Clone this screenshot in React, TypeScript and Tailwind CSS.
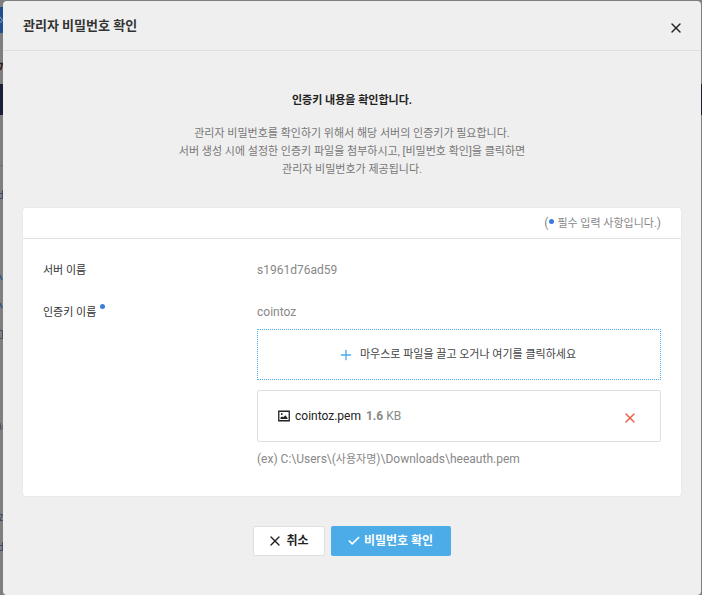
import { Check, Plus, X } from "lucide-react";

function Backdrop() {
  return (
    <div aria-hidden="true" className="absolute inset-0 overflow-hidden bg-[#7f7f7f]">
      <div className="absolute top-[7px] left-0 h-[26px] w-[3px] bg-[#1f4f8c]" />
      <div className="absolute inset-x-0 top-[84px] h-[31px] bg-[#1a1f38]" />
      <div className="absolute inset-x-0 top-[165px] h-px bg-[#6f6f6f]" />
      <svg width="3" height="595" viewBox="0 0 3 595" className="absolute top-0 left-0" fill="none">
        <path d="M0 17l3 4M0 22h2" stroke="#8fa9c8" />
        <path d="M0 63.5h2.5L.5 70" stroke="#33201c" strokeWidth="1.5" />
        <path d="M2.5 190v9M0 193.5h2M0 198.5h2" stroke="#414a66" />
        <path d="M0 275l2 5M0 303l2 5" stroke="#2f5688" strokeWidth="1.5" />
        <path d="M0 330.5h2.5v8H0" stroke="#4a4f5c" />
        <path d="M0 423l1 7M3 425v4" stroke="#4b4a5c" />
        <path d="M0 514.5h2.5L0 520.5h3" stroke="#414a66" />
        <path d="M2.5 542v9M0 545.5h2M0 550.5h2" stroke="#414a66" />
      </svg>
    </div>
  );
}

function ImageIcon() {
  return (
    <svg viewBox="0 0 12 12" className="size-3 shrink-0" fill="none" aria-hidden="true">
      <path d="M.75 1.25h10.5v9.5H.75z" stroke="#222" strokeWidth="1.3" />
      <path d="M2.5 9V7.6l1.6-1.2 1.2.8 2-2L9.5 8v1z" fill="#222" />
      <circle cx="3.8" cy="4" r=".9" fill="#222" />
    </svg>
  );
}

function RequiredDot() {
  return <span className="inline-block size-[5px] rounded-full bg-[#3b7ddd]" />;
}

export default function App() {
  return (
    <div className="relative flex min-h-screen flex-col pt-px pr-px pl-[3px] font-['Roboto','Noto_Sans_CJK_KR',sans-serif] text-[12px] leading-[18px] text-[#888]">
      <Backdrop />
      <section role="dialog" aria-labelledby="dialog-title" className="relative flex grow flex-col rounded-[4px] bg-[#efefef]">
        <header className="flex h-[50px] items-center justify-between border-b border-[#dfdfdf] pr-[17px] pl-5">
          <h1 id="dialog-title" className="text-[13px] font-bold text-[#333]">관리자 비밀번호 확인</h1>
          <button type="button" aria-label="닫기" className="mt-1 text-[#222]">
            <X size={16} strokeWidth={2} />
          </button>
        </header>

        <div className="px-5 pt-[41px] text-center text-[11px]">
          <h2 className="font-bold text-[#222]">인증키 내용을 확인합니다.</h2>
          <p className="mt-[15px] text-[#777]">
            관리자 비밀번호를 확인하기 위해서 해당 서버의 인증키가 필요합니다.
            <br />
            서버 생성 시에 설정한 인증키 파일을 첨부하시고, [비밀번호 확인]을 클릭하면
            <br />
            관리자 비밀번호가 제공됩니다.
          </p>
        </div>

        <form className="flex flex-col px-5 pt-[29px]" onSubmit={(event) => event.preventDefault()}>
          <div className="rounded-[3px] bg-white ring-1 ring-[#eaeaea]">
            <p className="flex h-[31px] items-center justify-end border-b border-[#e2e2e2] px-5 text-[11px]">
              <span className="text-[12px]">(</span>
              <span className="mr-[3px] ml-px mb-1 flex"><RequiredDot /></span>
              <span className="pt-px">필수 입력 사항입니다.</span>
              <span className="text-[12px]">)</span>
            </p>
            <dl className="grid grid-cols-[214px_1fr] gap-y-[23px] px-5 pt-[22px] pb-[27px]">
              <dt className="pt-px text-[11px] text-[#333]">서버 이름</dt>
              <dd>s1961d76ad59</dd>
              <dt className="flex items-start pt-px text-[11px] text-[#333]">
                <label htmlFor="key-file">인증키 이름</label>
                <span className="ml-1 flex"><RequiredDot /></span>
              </dt>
              <dd>
                <p>cointoz</p>
                <label htmlFor="key-file" className="mt-2 flex h-[51px] w-full cursor-pointer items-center justify-center gap-1.5 border border-dotted border-[#4bace8] pr-1 text-[11px] text-[#444]">
                  <Plus size={16} strokeWidth={2} className="text-[#4bace8]" />
                  마우스로 파일을 끌고 오거나 여기를 클릭하세요
                </label>
                <input id="key-file" type="file" accept=".pem" className="hidden" />
                <div className="mt-2.5 flex h-[52px] items-center rounded-[2px] border border-[#dfdfdf] pr-[22px] pl-5">
                  <ImageIcon />
                  <span className="ml-[5px] text-[#222]">cointoz.pem</span>
                  <span className="ml-[5px]"><b>1.6</b> KB</span>
                  <button type="button" aria-label="파일 삭제" className="mt-1 ml-auto text-[#ee5a47]">
                    <X size={16} strokeWidth={2} />
                  </button>
                </div>
                <p className="mt-2">
                  (ex) C:\Users\(<span className="text-[11px]">사용자명</span>)\Downloads\heeauth.pem
                </p>
              </dd>
            </dl>
          </div>

          <div className="flex justify-center gap-1.5 pt-[30px] pb-[38px] font-bold">
            <button type="button" className="flex h-[30px] w-[72px] items-center justify-center gap-[3px] rounded-[2px] border border-[#dfdfdf] bg-white pr-0.5 text-[#222]">
              <X size={16} strokeWidth={2} />
              취소
            </button>
            <button type="submit" className="flex h-[30px] w-[120px] items-center justify-center gap-[3px] rounded-[2px] bg-[#4bace8] pr-0.5 text-white">
              <Check size={14} strokeWidth={3} />
              비밀번호 확인
            </button>
          </div>
        </form>
      </section>
    </div>
  );
}
